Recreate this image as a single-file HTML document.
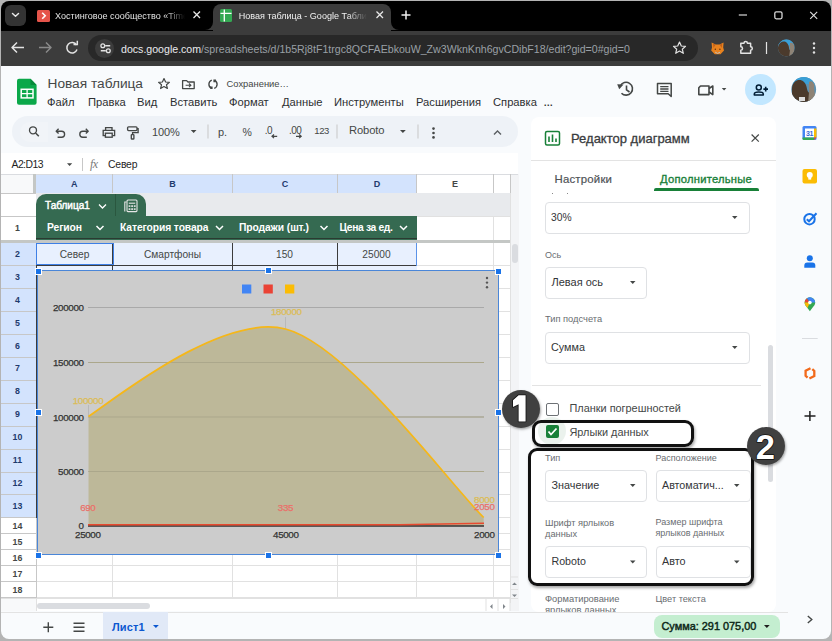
<!DOCTYPE html>
<html><head><meta charset="utf-8">
<style>
*{box-sizing:border-box;margin:0;padding:0}
html,body{width:832px;height:641px;overflow:hidden;background:#e9ebee}
body{font-family:"Liberation Sans",sans-serif;position:relative}
.a{position:absolute;white-space:nowrap}
svg{position:absolute;overflow:visible}
#win{position:absolute;left:0;top:0;width:832px;height:641px;overflow:hidden;background:#f9fbfd}
#frame{position:absolute;left:1px;top:1px;width:830px;height:638px;border-radius:8px;box-shadow:0 0 0 12px #b4b4b4;pointer-events:none}
</style></head><body>
<div id="win">
<!-- ===== Browser chrome ===== -->
<div class="a" style="left:0;top:0;width:832px;height:31px;background:#000"></div>
<!-- tab list button -->
<div class="a" style="left:5.3px;top:4.6px;width:20.7px;height:21px;border-radius:6px;background:#333"></div>
<svg style="left:0;top:0" width="40" height="30"><path d="M12.5 13.5 L15.5 16.2 L18.5 13.5" fill="none" stroke="#e8e8e8" stroke-width="1.5" stroke-linecap="round" stroke-linejoin="round"/></svg>
<!-- tab 1 -->
<div class="a" style="left:37.3px;top:9.8px;width:12.4px;height:12px;border-radius:1.5px;background:#e5544a"></div>
<svg style="left:0;top:0" width="60" height="30"><path d="M42.2 12.8 L45.2 15.8 L42.2 18.8" fill="none" stroke="#fff" stroke-width="1.6"/></svg>
<div class="a" style="left:55px;top:10.8px;font-size:9.05px;line-height:11px;color:#e3e3e3;width:130px;overflow:hidden;-webkit-mask-image:linear-gradient(90deg,#000 85%,transparent)">Хостинговое сообщество «Timeweb»</div>
<svg style="left:0;top:0" width="210" height="30"><path d="M193.5 11.5 L200 18 M200 11.5 L193.5 18" stroke="#e8e8e8" stroke-width="1.3"/></svg>
<!-- active tab -->
<div class="a" style="left:213px;top:4px;width:178px;height:27px;background:#3c3c3c;border-radius:8px 8px 0 0"></div>
<div class="a" style="left:205px;top:22px;width:8px;height:8px;background:#3c3c3c"></div>
<div class="a" style="left:205px;top:22px;width:8px;height:8px;background:#000;border-radius:0 0 8px 0"></div>
<div class="a" style="left:391px;top:22px;width:8px;height:8px;background:#3c3c3c"></div>
<div class="a" style="left:391px;top:22px;width:8px;height:8px;background:#000;border-radius:0 0 0 8px"></div>
<div class="a" style="left:220px;top:9px;width:12.2px;height:12.5px;border-radius:1.5px;background:#34a853"></div>
<svg style="left:0;top:0" width="240" height="30"><path d="M220.5 13.3 H231.5 M224.3 9.5 V21.5" stroke="#fff" stroke-width="1.3"/></svg>
<div class="a" style="left:238.7px;top:10.8px;font-size:9.05px;line-height:11px;color:#f0f0f0;width:128px;overflow:hidden;-webkit-mask-image:linear-gradient(90deg,#000 85%,transparent)">Новая таблица - Google Таблицы</div>
<svg style="left:0;top:0" width="400" height="30"><path d="M376.5 11.5 L383 18 M383 11.5 L376.5 18" stroke="#e8e8e8" stroke-width="1.3"/></svg>
<svg style="left:0;top:0" width="420" height="30"><path d="M406 10.5 V19.5 M401.5 15 H410.5" stroke="#f0f0f0" stroke-width="1.5"/></svg>
<!-- window controls -->
<svg style="left:0;top:0" width="830" height="30"><path d="M738.8 15 H747" stroke="#d8d8d8" stroke-width="1.2"/><rect x="774.8" y="11.8" width="7.2" height="7" rx="1.5" fill="none" stroke="#d8d8d8" stroke-width="1.3"/><path d="M810.2 11.8 L817.2 18.8 M817.2 11.8 L810.2 18.8" stroke="#e0e0e0" stroke-width="1.1"/></svg>

<!-- toolbar -->
<div class="a" style="left:0;top:30.5px;width:832px;height:35.5px;background:#3c3c3c"></div>
<svg style="left:0;top:0" width="100" height="65"><path d="M12 47.5 H24 M17 42.5 L12 47.5 L17 52.5" fill="none" stroke="#e3e3e3" stroke-width="1.5" stroke-linejoin="round"/><path d="M39 47.5 H51 M46 42.5 L51 47.5 L46 52.5" fill="none" stroke="#8a8a8a" stroke-width="1.5" stroke-linejoin="round"/><path d="M76.5 45 A5.2 5.2 0 1 0 77 49.5" fill="none" stroke="#e3e3e3" stroke-width="1.5"/><path d="M73.5 44.5 H77.3 V40.7" fill="none" stroke="#e3e3e3" stroke-width="1.5"/></svg>
<div class="a" style="left:87.5px;top:35px;width:610px;height:26px;border-radius:13px;background:#282828"></div>
<div class="a" style="left:94.5px;top:38.5px;width:19px;height:19px;border-radius:10px;background:#3c3c3c"></div>
<svg style="left:0;top:0" width="120" height="65"><path d="M105.2 45.8 H110.2 M100.8 50.7 H105.8" stroke="#e3e3e3" stroke-width="1.4"/><circle cx="102.8" cy="45.8" r="1.9" fill="none" stroke="#e3e3e3" stroke-width="1.3"/><circle cx="108.3" cy="50.7" r="1.9" fill="none" stroke="#e3e3e3" stroke-width="1.3"/></svg>
<div class="a" style="left:121px;top:42.5px;font-size:10.6px;line-height:13px;color:#9aa0a6"><span style="color:#e8eaed">docs.google.com</span>/spreadsheets/d/1b5Rj8tF1trgc8QCFAEbkouW_Zw3WknKnh6gvCDibF18/edit?gid=0#gid=0</div>
<svg style="left:0;top:0" width="700" height="65"><path d="M679.5 42 L681.3 46 L685.5 46.4 L682.3 49.2 L683.3 53.3 L679.5 51.1 L675.7 53.3 L676.7 49.2 L673.5 46.4 L677.7 46 Z" fill="none" stroke="#e3e3e3" stroke-width="1.2" stroke-linejoin="round"/></svg>
<!-- extensions -->
<svg style="left:0;top:0" width="830" height="65"><path d="M711.6 42.6 L715.6 44.6 H719.6 L723.6 42.6 L723.2 47.5 L724 50.5 L720.5 54.2 H714.7 L711.2 50.5 L712 47.5 Z" fill="#e8821e"/><path d="M713 43.8 L715.6 44.6 L713.5 48 Z M722.2 43.8 L719.6 44.6 L721.7 48 Z" fill="#c0601a"/><path d="M715.2 52.2 Q717.6 54.6 720 52.2" fill="none" stroke="#bdbdbd" stroke-width="1"/><circle cx="715.3" cy="49.2" r="0.7" fill="#5a2c0c"/><circle cx="719.9" cy="49.2" r="0.7" fill="#5a2c0c"/>
<path d="M740.8 43.2 H744 A1.7 1.7 0 0 1 747.4 43.2 H750.6 V46.8 A1.7 1.7 0 0 1 750.6 50.2 V53.2 H740.8 V50.2 A1.7 1.7 0 0 0 740.8 46.8 Z" fill="none" stroke="#e3e3e3" stroke-width="1.5" stroke-linejoin="round"/><path d="M766.5 42 V54" stroke="#e3e3e3" stroke-width="1.2"/><defs><clipPath id="av0"><circle cx="786.3" cy="48" r="8.4"/></clipPath></defs><g clip-path="url(#av0)"><rect x="777" y="39" width="19" height="19" fill="#5d91b0"/><rect x="777" y="39" width="19" height="6" fill="#3a9fd6"/><path d="M778 47 C779 42 784 40 787 43 C790 46 788 50 791 51 L792 58 H778 Z" fill="#4b3a2c"/><path d="M790 43 C792 42 795 44 794 48 L795 58 H789 L790 50 Z" fill="#8e8376"/></g><circle cx="814" cy="43.5" r="1.2" fill="#e3e3e3"/><circle cx="814" cy="48" r="1.2" fill="#e3e3e3"/><circle cx="814" cy="52.5" r="1.2" fill="#e3e3e3"/></svg>

<!-- ===== Docs header ===== -->
<!-- sheets logo -->
<svg style="left:0;top:0" width="40" height="110"><path d="M19 78.8 H30.5 L36.6 84.9 V102.7 A2 2 0 0 1 34.6 104.7 H19 A2 2 0 0 1 17 102.7 V80.8 A2 2 0 0 1 19 78.8 Z" fill="#0ba84a"/><path d="M30.5 78.8 V84.9 H36.6 Z" fill="#078a3a"/><rect x="21.2" y="89.3" width="11.8" height="8.6" fill="none" stroke="#fff" stroke-width="1.5"/><path d="M21.2 93.6 H33 M27.1 89.3 V97.9" stroke="#fff" stroke-width="1.3"/></svg>
<div class="a" style="left:47.5px;top:76.2px;font-size:13.7px;line-height:16px;color:#444746">Новая таблица</div>
<svg style="left:0;top:0" width="300" height="100"><path d="M164 78.5 L165.6 82 L169.4 82.3 L166.5 84.8 L167.4 88.5 L164 86.5 L160.6 88.5 L161.5 84.8 L158.6 82.3 L162.4 82 Z" fill="none" stroke="#444746" stroke-width="1.2" stroke-linejoin="round"/><g fill="none" stroke="#444746" stroke-width="1.3" stroke-linejoin="round"><path d="M182.6 80.6 H186.6 L188 82 H194.2 V88.6 H182.6 Z"/></g><path d="M185.6 85.3 H190.8 M189 83.5 L190.9 85.3 L189 87.1" fill="none" stroke="#444746" stroke-width="1.1"/>
<g fill="none" stroke="#444746" stroke-width="1.35"><path d="M211.8 80.1 A4.4 4.4 0 0 0 211.4 88.2"/><path d="M214.2 88.4 A4.4 4.4 0 0 0 214.6 80.3"/></g><path d="M209.8 86.4 H212.6 V89 H210.4 Z M213.4 79.6 H216 L215.6 82.2 H213.4 Z" fill="#444746"/></svg>
<div class="a" style="left:226.5px;top:78px;font-size:9.4px;line-height:11px;color:#444746">Сохранение…</div>
<div class="a" style="left:0;top:95.7px;font-size:11.2px;line-height:13px;color:#2d2f31">
<span class="a" style="left:47px">Файл</span><span class="a" style="left:88px">Правка</span><span class="a" style="left:137px">Вид</span><span class="a" style="left:170px">Вставить</span><span class="a" style="left:229px">Формат</span><span class="a" style="left:282px">Данные</span><span class="a" style="left:334px">Инструменты</span><span class="a" style="left:416px">Расширения</span><span class="a" style="left:493px">Справка</span><span class="a" style="left:543.5px;font-size:9.5px;top:0px;font-weight:700">…</span></div>
<!-- header right icons -->
<svg style="left:0;top:0" width="830" height="110"><g fill="none" stroke="#444746" stroke-width="1.6">
<path d="M620.3 86 A6.4 6.4 0 1 1 621.5 93.2"/><path d="M626.5 85.5 V89.8 L629.5 92"/></g>
<path d="M617.2 84.2 L623.6 84.6 L619.2 89.3 Z" fill="#444746"/>
<g fill="none" stroke="#444746" stroke-width="1.5" stroke-linejoin="round"><path d="M657.5 83.5 H671.2 V96.5 L668.2 93.8 H657.5 Z"/></g>
<path d="M660.2 86.6 H668.5 M660.2 89 H668.5 M660.2 91.4 H668.5" stroke="#444746" stroke-width="1.3"/>
<g fill="none" stroke="#444746" stroke-width="1.6" stroke-linejoin="round"><path d="M700.5 86 H709 V94.6 H698.8 V87.8 Z"/><path d="M709 88.5 L712.8 86 V94.6 L709 92"/></g>
<path d="M721.8 88 H726.4 L724.1 90.4 Z" fill="#444746"/></svg>
<div class="a" style="left:744.5px;top:74px;width:31.5px;height:31px;border-radius:16px;background:#c2e7ff"></div>
<svg style="left:0;top:0" width="830" height="110"><g fill="none" stroke="#001d35" stroke-width="1.5"><circle cx="758.8" cy="87.6" r="2.5"/><path d="M754.3 95 V94 C754.3 91.3 763.3 91.3 763.3 94 V95 Z" stroke-linejoin="round"/><path d="M765.7 86.8 V91.4 M763.4 89.1 H768" stroke-width="1.6"/></g></svg>
<svg style="left:0;top:0" width="830" height="110"><defs><clipPath id="av1"><circle cx="803.7" cy="89.5" r="12.4"/></clipPath></defs><g clip-path="url(#av1)"><rect x="790" y="76" width="28" height="28" fill="#5d91b0"/><rect x="790" y="76" width="28" height="8" fill="#3a9fd6"/><path d="M792 88 C793 80 800 78 804 82 C808 86 806 92 810 93 L812 104 H792 Z" fill="#4b3a2c"/><path d="M809 82 C812 80 815 83 814 88 L816 104 H808 L809 92 Z" fill="#8e8376"/><rect x="799" y="97" width="6" height="4" fill="#ddd"/></g></svg>


<!-- ===== Toolbar pill ===== -->
<div class="a" style="left:12px;top:116px;width:506px;height:31px;border-radius:16px;background:#eef2f7"></div>
<div class="a" style="left:20px;top:122px;width:28px;height:20px;border-radius:10px 0 0 10px;background:#f1f4f8"></div>
<svg style="left:0;top:0" width="520" height="150">
<g fill="none" stroke="#444746" stroke-width="1.35">
<circle cx="33" cy="130.3" r="3.5"/><path d="M35.6 132.9 L38.8 136.3" stroke-width="1.5"/>
<path d="M57 131.2 H61.6 A3 3 0 0 1 61.6 137.2 H57.6"/><path d="M58.6 128.8 L56.2 131.2 L58.6 133.6" stroke-linejoin="round"/>
<path d="M87.4 131.2 H82.8 A3 3 0 0 0 82.8 137.2 H86.8"/><path d="M85.8 128.8 L88.2 131.2 L85.8 133.6" stroke-linejoin="round"/>
<path d="M105.6 130.2 V127.6 H112 V130.2"/><path d="M105 135.6 H103.2 V130.4 H114.6 V135.6 H112.6"/><rect x="105.4" y="133.2" width="6.8" height="4"/>
<rect x="127.6" y="126.8" width="9.4" height="3.8" rx="1"/><path d="M137 128.7 H138.1 V132.6 H132.6 V134.5"/><rect x="131.3" y="134.6" width="2.6" height="4.4" rx="0.6"/>
<path d="M208 124.5 V138.5 M337 124.5 V138.5 M418 124.5 V138.5" stroke="#c7c7c7" stroke-width="1"/>
<path d="M272 136.3 H277.2 M274 134.5 L272 136.3 L274 138.1" stroke-width="1.2"/>
<path d="M296 136.3 H301.2 M299.2 134.5 L301.2 136.3 L299.2 138.1" stroke-width="1.2"/>
<path d="M494 134.5 L497.5 131 L501 134.5" stroke-width="1.4" stroke="#5a5e62"/>
</g>
<path d="M190.8 130 H196.5 L193.65 133 Z M400 130 H405.8 L402.9 133 Z" fill="#444746"/>
<circle cx="433.5" cy="128.6" r="1.3" fill="#444746"/><circle cx="433.5" cy="133" r="1.3" fill="#444746"/><circle cx="433.5" cy="137.4" r="1.3" fill="#444746"/>
</svg>
<div class="a" style="left:152px;top:126px;font-size:11px;line-height:13px;color:#444746;letter-spacing:-0.1px">100%</div>
<div class="a" style="left:218px;top:126px;font-size:11px;line-height:13px;color:#444746">р.</div>
<div class="a" style="left:242.5px;top:126px;font-size:10.5px;line-height:13px;color:#444746">%</div>
<div class="a" style="left:264.8px;top:124.2px;font-size:10px;line-height:13px;color:#444746;letter-spacing:-0.5px">.0</div>
<div class="a" style="left:289px;top:124.2px;font-size:10px;line-height:13px;color:#444746;letter-spacing:-0.5px">.00</div>
<div class="a" style="left:314.3px;top:124px;font-size:9.5px;line-height:13px;color:#444746;letter-spacing:-0.45px">123</div>
<div class="a" style="left:349px;top:124px;font-size:11.2px;line-height:13px;color:#444746;letter-spacing:-0.1px">Roboto</div>

<!-- ===== Formula bar ===== -->
<div class="a" style="left:0;top:153px;width:518px;height:21px;background:#fff"></div>
<div class="a" style="left:11.5px;top:158px;font-size:10.4px;line-height:13px;color:#1f1f1f;letter-spacing:-0.55px">A2:D13</div>
<svg style="left:0;top:0" width="520" height="180"><path d="M67 163.2 H72.2 L69.6 166 Z" fill="#444746"/><path d="M82.5 158 V171" stroke="#c7c7c7" stroke-width="1"/></svg>
<div class="a" style="left:90px;top:157px;font-family:'Liberation Serif',serif;font-style:italic;font-size:12px;line-height:14px;color:#7a7a7a;letter-spacing:-0.5px">fx</div>
<div class="a" style="left:108px;top:158px;font-size:10.4px;line-height:13px;color:#1f1f1f;letter-spacing:-0.2px">Север</div>
<!-- ===== Grid ===== -->
<div class="a" style="left:0;top:174px;width:510px;height:437px;background:#fff"></div>
<div class="a" style="left:510px;top:174px;width:8.5px;height:437px;background:#f3f4f6"></div>
<div class="a" style="left:0;top:174px;width:510px;height:19px;background:#f8f9fa"></div>
<div class="a" style="left:36px;top:174px;width:381px;height:19px;background:#d3e3fd"></div>
<div class="a" style="left:417px;top:174px;width:77px;height:19px;background:#fff"></div>
<div class="a" style="left:494px;top:174px;width:16px;height:19px;background:#fff"></div>
<div class="a" style="left:0;top:174px;width:518px;height:1px;background:#dadce0"></div>
<div class="a" style="left:33px;top:174px;width:3px;height:19px;background:#c4c7c5"></div>
<div class="a" style="left:36px;top:179px;width:76.5px;text-align:center;font-size:9px;line-height:11px;font-weight:700;color:#1f3b6e">A</div>
<div class="a" style="left:112.5px;top:179px;width:120.0px;text-align:center;font-size:9px;line-height:11px;font-weight:700;color:#1f3b6e">B</div>
<div class="a" style="left:232.5px;top:179px;width:105.0px;text-align:center;font-size:9px;line-height:11px;font-weight:700;color:#1f3b6e">C</div>
<div class="a" style="left:337.5px;top:179px;width:79.0px;text-align:center;font-size:9px;line-height:11px;font-weight:700;color:#1f3b6e">D</div>
<div class="a" style="left:416.5px;top:179px;width:77.0px;text-align:center;font-size:9px;line-height:11px;font-weight:700;color:#444746">E</div>
<div class="a" style="left:112.0px;top:174px;width:1px;height:19px;background:#c7c7c7"></div>
<div class="a" style="left:232.0px;top:174px;width:1px;height:19px;background:#c7c7c7"></div>
<div class="a" style="left:337.0px;top:174px;width:1px;height:19px;background:#c7c7c7"></div>
<div class="a" style="left:416.0px;top:174px;width:1px;height:19px;background:#c7c7c7"></div>
<div class="a" style="left:493.0px;top:174px;width:1px;height:19px;background:#c7c7c7"></div>
<div class="a" style="left:509.5px;top:174px;width:1px;height:19px;background:#c7c7c7"></div>
<div class="a" style="left:0;top:192.5px;width:510px;height:1px;background:#c7c7c7"></div>
<div class="a" style="left:0;top:215.5px;width:510px;height:1px;background:#e1e1e1"></div>
<div class="a" style="left:0;top:239.5px;width:510px;height:1px;background:#e1e1e1"></div>
<div class="a" style="left:0;top:265.4px;width:510px;height:1px;background:#e1e1e1"></div>
<div class="a" style="left:0;top:288.3px;width:510px;height:1px;background:#e1e1e1"></div>
<div class="a" style="left:0;top:311.2px;width:510px;height:1px;background:#e1e1e1"></div>
<div class="a" style="left:0;top:334.1px;width:510px;height:1px;background:#e1e1e1"></div>
<div class="a" style="left:0;top:357.0px;width:510px;height:1px;background:#e1e1e1"></div>
<div class="a" style="left:0;top:379.9px;width:510px;height:1px;background:#e1e1e1"></div>
<div class="a" style="left:0;top:402.8px;width:510px;height:1px;background:#e1e1e1"></div>
<div class="a" style="left:0;top:425.7px;width:510px;height:1px;background:#e1e1e1"></div>
<div class="a" style="left:0;top:448.6px;width:510px;height:1px;background:#e1e1e1"></div>
<div class="a" style="left:0;top:471.5px;width:510px;height:1px;background:#e1e1e1"></div>
<div class="a" style="left:0;top:494.4px;width:510px;height:1px;background:#e1e1e1"></div>
<div class="a" style="left:0;top:517.3px;width:510px;height:1px;background:#e1e1e1"></div>
<div class="a" style="left:0;top:533.3px;width:510px;height:1px;background:#e1e1e1"></div>
<div class="a" style="left:0;top:549.3px;width:510px;height:1px;background:#e1e1e1"></div>
<div class="a" style="left:0;top:565.3px;width:510px;height:1px;background:#e1e1e1"></div>
<div class="a" style="left:0;top:581.3px;width:510px;height:1px;background:#e1e1e1"></div>
<div class="a" style="left:0;top:597.3px;width:510px;height:1px;background:#e1e1e1"></div>
<div class="a" style="left:0;top:602.5px;width:510px;height:1px;background:#e1e1e1"></div>
<div class="a" style="left:112.0px;top:193px;width:1px;height:410px;background:#e1e1e1"></div>
<div class="a" style="left:232.0px;top:193px;width:1px;height:410px;background:#e1e1e1"></div>
<div class="a" style="left:337.0px;top:193px;width:1px;height:410px;background:#e1e1e1"></div>
<div class="a" style="left:416.0px;top:193px;width:1px;height:410px;background:#e1e1e1"></div>
<div class="a" style="left:493.0px;top:193px;width:1px;height:410px;background:#e1e1e1"></div>
<div class="a" style="left:509.5px;top:193px;width:1px;height:410px;background:#e1e1e1"></div>
<div class="a" style="left:35.5px;top:193px;width:1px;height:410px;background:#c7c7c7"></div>
<div class="a" style="left:36px;top:193px;width:474px;height:23px;background:#e8eaed"></div>
<div class="a" style="left:0;top:243px;width:35.5px;height:274.8px;background:#d3e3fd"></div>
<div class="a" style="left:0;top:222.5px;width:35px;text-align:center;font-size:8.8px;line-height:11px;font-weight:700;color:#444746">1</div>
<div class="a" style="left:0;top:248.9px;width:35px;text-align:center;font-size:8.8px;line-height:11px;font-weight:700;color:#1f3b6e">2</div>
<div class="a" style="left:0;top:271.8px;width:35px;text-align:center;font-size:8.8px;line-height:11px;font-weight:700;color:#1f3b6e">3</div>
<div class="a" style="left:0;top:294.7px;width:35px;text-align:center;font-size:8.8px;line-height:11px;font-weight:700;color:#1f3b6e">4</div>
<div class="a" style="left:0;top:317.6px;width:35px;text-align:center;font-size:8.8px;line-height:11px;font-weight:700;color:#1f3b6e">5</div>
<div class="a" style="left:0;top:340.5px;width:35px;text-align:center;font-size:8.8px;line-height:11px;font-weight:700;color:#1f3b6e">6</div>
<div class="a" style="left:0;top:363.4px;width:35px;text-align:center;font-size:8.8px;line-height:11px;font-weight:700;color:#1f3b6e">7</div>
<div class="a" style="left:0;top:386.3px;width:35px;text-align:center;font-size:8.8px;line-height:11px;font-weight:700;color:#1f3b6e">8</div>
<div class="a" style="left:0;top:409.2px;width:35px;text-align:center;font-size:8.8px;line-height:11px;font-weight:700;color:#1f3b6e">9</div>
<div class="a" style="left:0;top:432.1px;width:35px;text-align:center;font-size:8.8px;line-height:11px;font-weight:700;color:#1f3b6e">10</div>
<div class="a" style="left:0;top:455.0px;width:35px;text-align:center;font-size:8.8px;line-height:11px;font-weight:700;color:#1f3b6e">11</div>
<div class="a" style="left:0;top:477.9px;width:35px;text-align:center;font-size:8.8px;line-height:11px;font-weight:700;color:#1f3b6e">12</div>
<div class="a" style="left:0;top:500.8px;width:35px;text-align:center;font-size:8.8px;line-height:11px;font-weight:700;color:#1f3b6e">13</div>
<div class="a" style="left:0;top:521.1px;width:35px;text-align:center;font-size:8.8px;line-height:11px;font-weight:700;color:#444746">14</div>
<div class="a" style="left:0;top:537.1px;width:35px;text-align:center;font-size:8.8px;line-height:11px;font-weight:700;color:#444746">15</div>
<div class="a" style="left:0;top:553.1px;width:35px;text-align:center;font-size:8.8px;line-height:11px;font-weight:700;color:#444746">16</div>
<div class="a" style="left:0;top:569.1px;width:35px;text-align:center;font-size:8.8px;line-height:11px;font-weight:700;color:#444746">17</div>
<div class="a" style="left:0;top:585.1px;width:35px;text-align:center;font-size:8.8px;line-height:11px;font-weight:700;color:#444746">18</div>
<div class="a" style="left:0;top:215.5px;width:36px;height:1px;background:#c7c7c7"></div>
<div class="a" style="left:0;top:239.5px;width:36px;height:1px;background:#c7c7c7"></div>
<div class="a" style="left:0;top:265.4px;width:36px;height:1px;background:#c7c7c7"></div>
<div class="a" style="left:0;top:288.3px;width:36px;height:1px;background:#c7c7c7"></div>
<div class="a" style="left:0;top:311.2px;width:36px;height:1px;background:#c7c7c7"></div>
<div class="a" style="left:0;top:334.1px;width:36px;height:1px;background:#c7c7c7"></div>
<div class="a" style="left:0;top:357.0px;width:36px;height:1px;background:#c7c7c7"></div>
<div class="a" style="left:0;top:379.9px;width:36px;height:1px;background:#c7c7c7"></div>
<div class="a" style="left:0;top:402.8px;width:36px;height:1px;background:#c7c7c7"></div>
<div class="a" style="left:0;top:425.7px;width:36px;height:1px;background:#c7c7c7"></div>
<div class="a" style="left:0;top:448.6px;width:36px;height:1px;background:#c7c7c7"></div>
<div class="a" style="left:0;top:471.5px;width:36px;height:1px;background:#c7c7c7"></div>
<div class="a" style="left:0;top:494.4px;width:36px;height:1px;background:#c7c7c7"></div>
<div class="a" style="left:0;top:517.3px;width:36px;height:1px;background:#c7c7c7"></div>
<div class="a" style="left:0;top:533.3px;width:36px;height:1px;background:#c7c7c7"></div>
<div class="a" style="left:0;top:549.3px;width:36px;height:1px;background:#c7c7c7"></div>
<div class="a" style="left:0;top:565.3px;width:36px;height:1px;background:#c7c7c7"></div>
<div class="a" style="left:0;top:581.3px;width:36px;height:1px;background:#c7c7c7"></div>
<div class="a" style="left:0;top:597.3px;width:36px;height:1px;background:#c7c7c7"></div>
<div class="a" style="left:0;top:602.5px;width:36px;height:1px;background:#c7c7c7"></div>
<div class="a" style="left:0;top:239.5px;width:510px;height:3.5px;background:#c4c7c5"></div>
<div class="a" style="left:36px;top:193.8px;width:110px;height:23px;background:#356a51;border-radius:10px 10px 0 0"></div>
<div class="a" style="left:114.5px;top:194px;width:1px;height:22px;background:#2a573f"></div>
<div class="a" style="left:45px;top:199.5px;font-size:10px;line-height:12px;color:#fff;-webkit-text-stroke:0.45px #fff">Таблица1</div>
<svg style="left:0;top:0" width="520" height="260"><g fill="none" stroke="#fff" stroke-width="1.3"><path d="M99 204.5 L102.5 208 L106 204.5"/></g><g fill="none" stroke="#e6e6e6" stroke-width="1.1"><path d="M124.8 211.5 V202 H126.5"/><rect x="127" y="200" width="10" height="11.6" rx="1"/><path d="M128.8 203.2 H135.2"/></g><g fill="#e6e6e6"><rect x="128.6" y="205.3" width="1.8" height="1.6"/><rect x="131.2" y="205.3" width="1.8" height="1.6"/><rect x="133.8" y="205.3" width="1.8" height="1.6"/><rect x="128.6" y="208.3" width="1.8" height="1.6"/><rect x="131.2" y="208.3" width="1.8" height="1.6"/><rect x="133.8" y="208.3" width="1.8" height="1.6"/></g></svg>
<div class="a" style="left:36px;top:216px;width:381px;height:23.5px;background:#356a51"></div>
<div class="a" style="left:36px;top:238.4px;width:381px;height:1px;background:#2b3a31"></div>
<div class="a" style="left:47px;top:222.4px;font-size:10.3px;line-height:12px;font-weight:700;color:#fff;letter-spacing:-0.1px">Регион</div>
<div class="a" style="left:120px;top:222.4px;font-size:10.3px;line-height:12px;font-weight:700;color:#fff;letter-spacing:-0.1px">Категория товара</div>
<div class="a" style="left:239px;top:222.4px;font-size:10.3px;line-height:12px;font-weight:700;color:#fff;letter-spacing:-0.1px">Продажи (шт.)</div>
<div class="a" style="left:339.5px;top:222.4px;font-size:10.3px;line-height:12px;font-weight:700;color:#fff;letter-spacing:-0.35px">Цена за ед.</div>
<svg style="left:0;top:0" width="520" height="260"><g fill="none" stroke="#fff" stroke-width="1.5"><path d="M96.5 226 L100 229.5 L103.5 226"/><path d="M216.0 226 L219.5 229.5 L223.0 226"/><path d="M320.5 226 L324 229.5 L327.5 226"/><path d="M400.0 226 L403.5 229.5 L407.0 226"/></g></svg>
<div class="a" style="left:36px;top:243px;width:381px;height:22.9px;background:#e8f0fe"></div>
<div class="a" style="left:36px;top:265.9px;width:381px;height:4px;background:#e8f0fe"></div>
<div class="a" style="left:36px;top:248.5px;width:77px;text-align:center;font-size:10.2px;line-height:12px;color:#444746">Север</div>
<div class="a" style="left:113px;top:248.5px;width:119px;text-align:center;font-size:10.2px;line-height:12px;color:#444746">Смартфоны</div>
<div class="a" style="left:232px;top:248.5px;width:105px;text-align:center;font-size:10.2px;line-height:12px;color:#444746">150</div>
<div class="a" style="left:337px;top:248.5px;width:79px;text-align:center;font-size:10.2px;line-height:12px;color:#444746">25000</div>
<div class="a" style="left:112.0px;top:243px;width:1.2px;height:28px;background:#3c3c3c"></div>
<div class="a" style="left:232.0px;top:243px;width:1.2px;height:28px;background:#3c3c3c"></div>
<div class="a" style="left:337.0px;top:243px;width:1.2px;height:28px;background:#3c3c3c"></div>
<div class="a" style="left:36px;top:265.3px;width:381px;height:1.2px;background:#3c3c3c"></div>
<div class="a" style="left:36px;top:242.8px;width:77.5px;height:22.7px;border:1.6px solid #3d7fe6"></div>
<div class="a" style="left:416px;top:243px;width:1.3px;height:23px;background:#5a92e8"></div>
<div class="a" style="left:511.5px;top:244px;width:6px;height:19px;border-radius:3px;background:#dadce0"></div>
<div class="a" style="left:0;top:598px;width:510px;height:13px;background:#fff"></div>
<div class="a" style="left:0;top:598px;width:36px;height:13px;background:#f8f9fa"></div>
<div class="a" style="left:35.5px;top:598px;width:1px;height:13px;background:#e1e1e1"></div>
<div class="a" style="left:0;top:597.5px;width:518px;height:1px;background:#e1e1e1"></div>
<div class="a" style="left:37px;top:602.5px;width:113px;height:6px;border-radius:3px;background:#dadce0"></div>
<svg style="left:0;top:0" width="520" height="620"><path d="M512 585 L514.5 582.5 L517 585 Z M512 594.5 L514.5 597 L517 594.5 Z" fill="#80868b"/><path d="M492.5 604 L490 606.5 L492.5 609 Z M503 604 L505.5 606.5 L503 609 Z" fill="#80868b"/><path d="M486 598 V611 M498 598 V611 M510 598 V611" stroke="#e1e1e1" stroke-width="1"/><path d="M510 577 H518 M510 589.5 H518" stroke="#e1e1e1" stroke-width="1"/></svg>
<!-- ===== Chart ===== -->
<div class="a" style="left:38px;top:271px;width:459.5px;height:282.5px;background:#cccccc"></div>
<svg style="left:0;top:0" width="520" height="600">
<g stroke="#a9a9a9" stroke-width="1"><path d="M88 307.5 H484 M88 362.5 H484 M88 417 H484 M88 471.5 H484"/></g>
<path d="M88.5 416.5 C116 398 222.3 312.8 285.5 329 C348.7 345.2 452 487.3 483.7 517.5 V526 H88.5 Z" fill="#bdb899" fill-opacity="1"/>
<g stroke="#aba78b" stroke-width="1"><path d="M88.5 362.5 H484 M88.5 417 H484 M88.5 471.5 H484" /></g>
<path d="M88.5 362.5 H205 M348 362.5 H484" stroke="#a9a9a9" stroke-width="1" opacity="0"/>
<path d="M285.5 317 V329 M88.5 405 V416" stroke="#b9b9b9" stroke-width="1"/>
<path d="M88.5 416.5 C116 398 222.3 312.8 285.5 329 C348.7 345.2 452 487.3 483.7 517.5" fill="none" stroke="#f5b719" stroke-width="1.7"/>
<path d="M88 526 H484" stroke="#333" stroke-width="1.3"/>
<path d="M88 524.7 H400 L484 523.3" stroke="#e8492f" stroke-width="1.6" fill="none"/>
<rect x="242" y="284.5" width="9.3" height="9" fill="#4285f4"/><rect x="263.5" y="284.5" width="9.3" height="9" fill="#ea4335"/><rect x="285" y="284.5" width="9.3" height="9" fill="#fbbc04"/>
<circle cx="487" cy="278" r="1.2" fill="#555"/><circle cx="487" cy="282.6" r="1.2" fill="#555"/><circle cx="487" cy="287.2" r="1.2" fill="#555"/>
</svg>
<svg style="left:0;top:0" width="520" height="600" font-family="Liberation Sans" font-size="9.8" letter-spacing="-0.35" stroke-width="0.25">
<g fill="#333" stroke="#333" text-anchor="end"><text x="83.6" y="311.3">200000</text><text x="83.6" y="366">150000</text><text x="83.6" y="420.6">100000</text><text x="83.6" y="475.2">50000</text><text x="83.6" y="529.3">0</text></g>
<g fill="#333" stroke="#333" text-anchor="middle"><text x="87.8" y="538.3">25000</text><text x="285.8" y="538.3">45000</text><text x="484.3" y="538.3">2000</text></g>
<g fill="#dcbc55" stroke="#dcbc55" text-anchor="middle"><text x="286.3" y="315.4">180000</text><text x="88" y="403.5">100000</text><text x="484.3" y="503.3">8000</text></g>
<g fill="#e9706a" stroke="#e9706a" text-anchor="middle"><text x="87.8" y="511.2">690</text><text x="285.5" y="511">335</text><text x="484.3" y="510.4">2050</text></g>
</svg>
<div class="a" style="left:35.5px;top:265px;width:1.2px;height:253px;background:#3c3c3c"></div>
<!-- frame -->
<div class="a" style="left:37px;top:270px;width:461.5px;height:285px;border:1.5px solid #4a86d8"></div>
<div class="a" style="left:35px;top:267.5px;width:7px;height:7px;background:#1a73e8;border:1px solid #fff"></div>
<div class="a" style="left:265px;top:267px;width:7px;height:7px;background:#1a73e8;border:1px solid #fff"></div>
<div class="a" style="left:494.5px;top:267.5px;width:7px;height:7px;background:#1a73e8;border:1px solid #fff"></div>
<div class="a" style="left:35px;top:408.5px;width:7px;height:7px;background:#1a73e8;border:1px solid #fff"></div>
<div class="a" style="left:494.5px;top:408.5px;width:7px;height:7px;background:#1a73e8;border:1px solid #fff"></div>
<div class="a" style="left:35px;top:551.6px;width:7px;height:7px;background:#1a73e8;border:1px solid #fff"></div>
<div class="a" style="left:265px;top:551.6px;width:7px;height:7px;background:#1a73e8;border:1px solid #fff"></div>
<div class="a" style="left:494.5px;top:551.6px;width:7px;height:7px;background:#1a73e8;border:1px solid #fff"></div>
<!-- ===== Chart editor panel ===== -->
<div class="a" style="left:531px;top:117px;width:245px;height:494.5px;background:#fff;border-radius:8px"></div>
<svg style="left:0;top:0" width="780" height="200">
<rect x="545.5" y="131.5" width="14" height="13.5" rx="1.5" fill="none" stroke="#188038" stroke-width="1.5"/>
<path d="M549 136.5 V142 M552.5 134.5 V142 M556 138.5 V142" stroke="#188038" stroke-width="1.6"/>
<path d="M751.6 134.5 L758.8 141.7 M758.8 134.5 L751.6 141.7" stroke="#444746" stroke-width="1.2"/>
</svg>
<div class="a" style="left:571px;top:131px;font-size:13px;line-height:15px;color:#3a3c3e;-webkit-text-stroke:0.3px #3a3c3e">Редактор диаграмм</div>
<div class="a" style="left:531px;top:159.5px;width:245px;height:1px;background:#e3e3e3"></div>
<div class="a" style="left:554.5px;top:172.8px;font-size:11.4px;line-height:13px;color:#4f5357;letter-spacing:0.2px;-webkit-text-stroke:0.2px #4f5357">Настройки</div>
<div class="a" style="left:660px;top:172.8px;font-size:11.2px;line-height:13px;color:#188038;letter-spacing:0.25px;-webkit-text-stroke:0.35px #188038">Дополнительные</div>
<div class="a" style="left:654px;top:188px;width:104.5px;height:2.6px;border-radius:2px 2px 0 0;background:#188038"></div>
<div class="a" style="left:551.5px;top:192.5px;width:1.2px;height:1.2px;background:#888"></div>
<div class="a" style="left:566.5px;top:192.5px;width:1.2px;height:1.2px;background:#888"></div>
<!-- dropdowns -->
<div class="a" style="left:545px;top:201.5px;width:204.5px;height:32px;border:1px solid #dfe1e4;border-radius:4px"></div>
<div class="a" style="left:551px;top:211px;font-size:10.3px;line-height:13px;color:#333537">30%</div>
<div class="a" style="left:545px;top:249.5px;font-size:9px;line-height:11px;color:#696d71">Ось</div>
<div class="a" style="left:545px;top:266.5px;width:102px;height:32px;border:1px solid #dfe1e4;border-radius:4px"></div>
<div class="a" style="left:551.5px;top:275.5px;font-size:11px;line-height:13px;color:#333537">Левая ось</div>
<div class="a" style="left:545px;top:314px;font-size:9.3px;line-height:11px;color:#696d71">Тип подсчета</div>
<div class="a" style="left:545px;top:331.5px;width:204.5px;height:32px;border:1px solid #dfe1e4;border-radius:4px"></div>
<div class="a" style="left:551px;top:340.5px;font-size:10.8px;line-height:13px;color:#333537">Сумма</div>
<div class="a" style="left:532px;top:384.5px;width:229px;height:1px;background:#e3e3e3"></div>
<!-- scrollbar -->
<div class="a" style="left:767.5px;top:345px;width:5px;height:137px;border-radius:3px;background:#dadce0"></div>
<!-- checkboxes -->
<div class="a" style="left:538px;top:417px;width:28px;height:28px;border-radius:14px;background:#e6efe8;opacity:.8"></div>
<div class="a" style="left:545.5px;top:402.5px;width:13.8px;height:13px;border:1.8px solid #6d7175;border-radius:2px"></div>
<div class="a" style="left:569.5px;top:402px;font-size:10.9px;line-height:13px;color:#444746">Планки погрешностей</div>
<div class="a" style="left:545.5px;top:425px;width:13.8px;height:13.3px;background:#188038;border-radius:2px"></div>
<svg style="left:0;top:0" width="780" height="450"><path d="M548.5 431.5 L551 434.5 L556.5 428.5" fill="none" stroke="#fff" stroke-width="1.8"/></svg>
<div class="a" style="left:569.5px;top:425.5px;font-size:10.9px;line-height:13px;color:#444746">Ярлыки данных</div>
<!-- data label settings -->
<div class="a" style="left:545px;top:453px;font-size:9.2px;line-height:11px;color:#696d71">Тип</div>
<div class="a" style="left:655.5px;top:452.8px;font-size:9px;line-height:11px;color:#696d71">Расположение</div>
<div class="a" style="left:545px;top:469.5px;width:102px;height:32px;border:1px solid #dfe1e4;border-radius:4px"></div>
<div class="a" style="left:655.5px;top:469.5px;width:95px;height:32px;border:1px solid #dfe1e4;border-radius:4px"></div>
<div class="a" style="left:551.5px;top:478.5px;font-size:10.8px;line-height:13px;color:#333537">Значение</div>
<div class="a" style="left:662px;top:478.5px;font-size:10.7px;line-height:13px;color:#333537">Автоматич...</div>
<div class="a" style="left:545px;top:517.5px;font-size:9.25px;line-height:11.6px;color:#696d71">Шрифт ярлыков<br>данных</div>
<div class="a" style="left:655.5px;top:516.6px;font-size:9px;line-height:11.6px;color:#696d71">Размер шрифта<br>ярлыков данных</div>
<div class="a" style="left:545px;top:546px;width:102px;height:32px;border:1px solid #dfe1e4;border-radius:4px"></div>
<div class="a" style="left:655.5px;top:546px;width:95px;height:32px;border:1px solid #dfe1e4;border-radius:4px"></div>
<div class="a" style="left:551.5px;top:555px;font-size:10.65px;line-height:13px;color:#333537">Roboto</div>
<div class="a" style="left:662px;top:555px;font-size:10.8px;line-height:13px;color:#333537">Авто</div>
<div class="a" style="left:545px;top:593.5px;font-size:9.35px;line-height:11px;color:#696d71">Форматирование<br>ярлыков данных</div>
<div class="a" style="left:655.5px;top:593.5px;font-size:9.2px;line-height:11px;color:#696d71">Цвет текста</div>
<svg style="left:0;top:0" width="780" height="600"><g fill="#444746">
<path d="M732 216 H737.5 L734.75 219 Z"/>
<path d="M630 281 H635.5 L632.75 284 Z"/>
<path d="M732 346 H737.5 L734.75 349 Z"/>
<path d="M630 484 H635.5 L632.75 487 Z"/>
<path d="M734 484 H739.5 L736.75 487 Z"/>
<path d="M630 560.5 H635.5 L632.75 563.5 Z"/>
<path d="M734 560.5 H739.5 L736.75 563.5 Z"/>
</g></svg>

<!-- ===== Right side strip ===== -->
<svg style="left:0;top:0" width="830" height="440">
<rect x="802.5" y="126" width="14" height="14" rx="1.5" fill="#4285f4"/>
<rect x="805" y="128.5" width="9" height="9" fill="#fff"/>
<path d="M802.5 137.5 H814 V140 H804 A1.5 1.5 0 0 1 802.5 138.5 Z" fill="#34a853"/>
<path d="M814 128.5 H816.5 V137.5 H814 Z" fill="#fbbc04"/>
<path d="M814 137.5 H816.5 L814 140 Z" fill="#ea4335"/>
<text x="809.5" y="136.4" font-family="Liberation Sans" font-size="7" font-weight="700" fill="#3367d6" text-anchor="middle" letter-spacing="-0.3">31</text>
<rect x="802.5" y="169" width="14.5" height="14.5" rx="2" fill="#fbbc04"/>
<circle cx="809.75" cy="175" r="3" fill="#fff"/><rect x="808.3" y="177" width="2.9" height="2.6" fill="#fff"/>
<circle cx="809.5" cy="219.2" r="5.2" fill="none" stroke="#1a73e8" stroke-width="2"/>
<path d="M806.8 219.2 L809 221.3 L816.5 213.3" fill="none" stroke="#1a73e8" stroke-width="2"/>
<circle cx="809.8" cy="258.3" r="3" fill="#1a73e8"/><path d="M804.3 267.7 V265.5 A3 3 0 0 1 807.3 262.5 H812.3 A3 3 0 0 1 815.3 265.5 V267.7 Z" fill="#1a73e8"/>
<path d="M809.9 311.3 C807 307 804.6 305.5 804.6 302.6 A5.3 5.3 0 0 1 815.2 302.6 C815.2 305.5 812.8 307 809.9 311.3 Z" fill="#34a853"/>
<path d="M804.6 302.6 A5.3 5.3 0 0 1 807 298.2 L809.9 302.6 Z" fill="#ea4335"/>
<path d="M807 298.2 A5.3 5.3 0 0 1 815.2 302.6 L809.9 302.6 Z" fill="#4285f4"/>
<path d="M804.6 302.6 C804.6 304.5 806 306 807.5 308 L809.9 302.6 Z" fill="#fbbc04"/>
<circle cx="809.9" cy="302.6" r="1.8" fill="#fff"/>
<path d="M802 338.5 H817.7" stroke="#dadce0" stroke-width="1"/>
<path d="M810.5 368.2 L805.6 370.8 V375.8 L807.6 377.6 M809.4 378.6 L814.3 376 V371 L812.3 369.2" fill="none" stroke="#f26a1b" stroke-width="2.3" stroke-linejoin="miter"/>
<path d="M809.9 411 V421 M804.5 416 H815.5" stroke="#1f1f1f" stroke-width="1.5"/>
</svg>
<!-- ===== Bottom bar ===== -->
<div class="a" style="left:0;top:612px;width:832px;height:29px;background:#f9fbfd"></div>
<div class="a" style="left:0;top:611.5px;width:788px;height:1px;background:#e3e3e3"></div>
<svg style="left:0;top:0" width="830" height="641">
<path d="M48.3 622.3 V632.3 M43.3 627.3 H53.3" stroke="#444746" stroke-width="1.4"/>
<path d="M73.5 623.3 H84.5 M73.5 627.3 H84.5 M73.5 631.3 H84.5" stroke="#444746" stroke-width="1.4"/>
<path d="M807.8 616 L811.8 619.5 L807.8 623" fill="none" stroke="#444746" stroke-width="1.4"/>
</svg>
<div class="a" style="left:103px;top:612px;width:65px;height:27px;background:#e1e9f7"></div>
<div class="a" style="left:112px;top:620.5px;font-size:11px;line-height:13px;font-weight:700;color:#0b57d0;letter-spacing:0.1px">Лист1</div>
<svg style="left:0;top:0" width="830" height="641"><path d="M153 625 H158.8 L155.9 628 Z" fill="#0b57d0"/></svg>
<div class="a" style="left:654px;top:615px;width:126px;height:23px;border-radius:8px;background:#c4eed0"></div>
<div class="a" style="left:661.5px;top:620px;font-size:10.9px;line-height:13px;color:#0d2818;-webkit-text-stroke:0.45px #0d2818">Сумма: 291 075,00</div>
<svg style="left:0;top:0" width="830" height="641"><path d="M764 625 H769.7 L766.85 628 Z" fill="#1f1f1f"/></svg>
<!-- ===== Annotations ===== -->
<div class="a" style="left:531.5px;top:419.5px;width:162.5px;height:27px;border:3px solid #111;border-radius:9px;box-shadow:1px 2px 3px rgba(0,0,0,.35)"></div>
<div class="a" style="left:528px;top:448.2px;width:226px;height:138.3px;border:3px solid #111;border-radius:9px;box-shadow:1px 2px 3px rgba(0,0,0,.35)"></div>
<div class="a" style="left:502px;top:390px;width:38px;height:38px;border-radius:19px;background:#404040;box-shadow:1px 1.5px 2.5px rgba(0,0,0,.35)"></div>
<div class="a" style="left:747.4px;top:427.4px;width:38px;height:38px;border-radius:19px;background:#404040;box-shadow:1px 1.5px 2.5px rgba(0,0,0,.35)"></div>
<svg style="left:0;top:0" width="832" height="480">
<path d="M518.6 395.2 H525.6 V421.5 H518.6 V404.2 L513 407 V400.2 Z" fill="#fff" stroke="#111" stroke-width="1.6" stroke-linejoin="round" paint-order="stroke"/>
<text x="765.3" y="459" font-family="Liberation Sans" font-weight="700" font-size="34.5" text-anchor="middle" fill="#fff" stroke="#111" stroke-width="1.6" paint-order="stroke" stroke-linejoin="round">2</text>
</svg>
<div id="frame"></div></div>
</body></html>
